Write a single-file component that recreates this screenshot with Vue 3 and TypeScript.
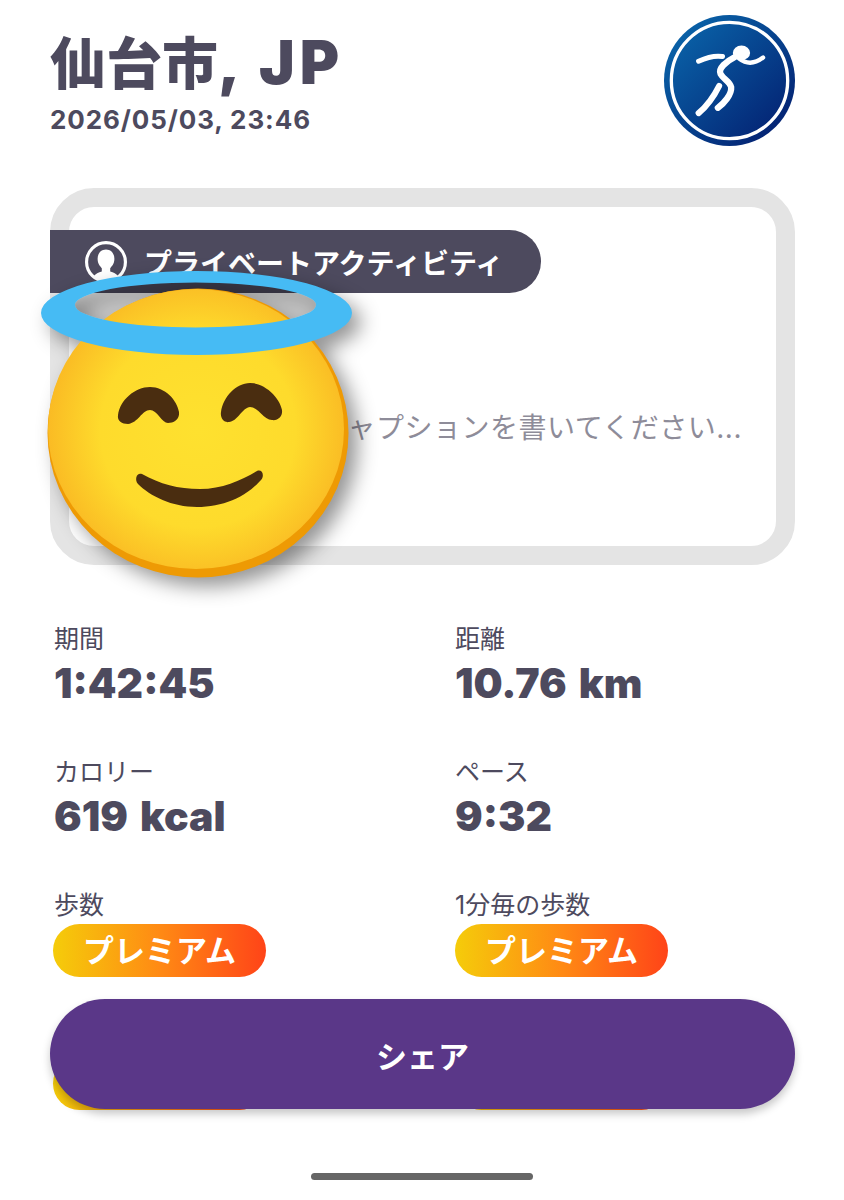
<template>
  <div class="page">
    <header class="header">
      <div class="place">
        <h1 class="title">仙台市<span class="title-latin">, JP</span></h1>
        <div class="date">{{ date }}</div>
      </div>
      <svg class="logo" viewBox="70 45 394 394">
        <defs>
          <linearGradient id="logoFill" x1="0" y1="0" x2="1" y2="1">
            <stop offset="0" stop-color="#0a6cb0" />
            <stop offset="1" stop-color="#03196b" />
          </linearGradient>
        </defs>
        <circle cx="267" cy="242" r="197" fill="url(#logoFill)" />
        <circle cx="267" cy="242" r="175" fill="none" stroke="#fff" stroke-width="10" />
        <g fill="none" stroke="#fff" stroke-linecap="round" stroke-linejoin="round">
          <path d="M174 184C200 172 222 166 246 170" stroke-width="15" />
          <path d="M296 176C314 190 338 196 368 173" stroke-width="13" />
          <path d="M282 172C258 184 232 206 240 222C248 238 268 244 272 262C274 284 250 312 232 324" stroke-width="19" />
          <path d="M236 258C222 286 198 320 174 340" stroke-width="18" />
        </g>
        <ellipse cx="303" cy="159" rx="26" ry="22" fill="#fff" />
      </svg>
    </header>

    <section class="card">
      <div class="private">
        <svg class="private-icon" viewBox="0 0 40 40">
          <circle cx="20" cy="20" r="18.500" fill="#4d4a5e" stroke="#fff" stroke-width="3" />
          <path d="M20 8c5 0 8 4 8 9s-2.500 7-4 9v3c3 1 6 2 8 5-3 3-7 4-12 4s-9-1-12-4c2-3 5-4 8-5v-3c-1.500-2-4-4-4-9s3-9 8-9z" fill="#fff" />
        </svg>
        <span>プライベートアクティビティ</span>
      </div>
      <p class="caption">キャプションを書いてください...</p>
    </section>

    <div class="stats">
      <div v-for="stat in stats" :key="stat.label" class="stat">
        <div class="stat-label">{{ stat.label }}</div>
        <div v-if="stat.value" class="stat-value">{{ stat.value }}</div>
        <div v-else class="premium">プレミアム</div>
      </div>
    </div>

    <!-- emoji sits on top of the card -->
    <svg class="emoji" viewBox="30 260 340 340">
      <defs>
        <radialGradient id="faceFill" cx="198" cy="430" r="150" gradientUnits="userSpaceOnUse">
          <stop offset="0" stop-color="#fee12f" />
          <stop offset="0.65" stop-color="#fedb2c" />
          <stop offset="1" stop-color="#fabb24" />
        </radialGradient>
      </defs>
      <ellipse cx="195.500" cy="305" rx="120.500" ry="22.500" fill="rgba(0, 0, 0, 0.14)" />
      <ellipse cx="198" cy="433" rx="150.500" ry="144.500" fill="#ee9a04" />
      <ellipse cx="196" cy="429" rx="148" ry="140" fill="url(#faceFill)" />
      <g fill="#4a2d10">
        <path d="M118 415C120 400 135 387 150 387C165 387 177 400 179 412C180 420 173 423 168 423C162 423 157 410 150 410C142 410 138 423 128 424C122 424 117 421 118 415Z" />
        <path d="M221 412C223 397 236 383 250 383C265 383 280 398 282 410C283 417 277 421 272 420C264 420 258 407 250 407C243 407 237 422 229 422C224 423 220 418 221 412Z" />
        <path d="M142 474C160 484 178 489 200 489C222 489 240 481 257 471C262 469 265 475 261 480C245 498 222 507 197 507C172 507 150 496 138 484C134 479 137 472 142 474Z" />
      </g>
      <path fill-rule="evenodd" fill="#46bbf4" d="M41 313a155.500 42 0 1 0 311 0a155.500 42 0 1 0-311 0ZM75 305a120.500 22.500 0 1 1 241 0a120.500 22.500 0 1 1-241 0Z" />
    </svg>

    <button class="share">シェア</button>
    <div class="home-bar"></div>
  </div>
</template>

<script setup lang="ts">
interface Stat {
  label: string
  value?: string
}

const date = '2026/05/03, 23:46'

const stats: Stat[] = [
  { label: '期間', value: '1:42:45' },
  { label: '距離', value: '10.76 km' },
  { label: 'カロリー', value: '619 kcal' },
  { label: 'ペース', value: '9:32' },
  { label: '歩数' },
  { label: '1分毎の歩数' },
  { label: 'ケイデンス' },
  { label: 'ストライド' }
]
</script>

<style scoped>
.page {
  position: relative;
  width: 844px;
  height: 1200px;
  overflow: hidden;
  background: #fff;
  box-sizing: border-box;
  padding: 15px 49px 0 50px;
  color: #4d4a5e;
  font-family: "Inter", "Noto Sans CJK JP", sans-serif;
}

.header {
  display: flex;
  justify-content: space-between;
  align-items: flex-start;
}

.place {
  padding-top: 10px;
}

.title {
  margin: 0;
  font-size: 56px;
  line-height: 74px;
  font-weight: 800;
  white-space: nowrap;
}

.title-latin {
  font-size: 60px;
  font-weight: 900;
  letter-spacing: 5px;
}

.date {
  font-size: 26px;
  line-height: 34px;
  font-weight: 700;
  letter-spacing: 0.9px;
  margin-top: 2px;
}

.logo {
  width: 131px;
  height: 131px;
}

.card {
  position: relative;
  height: 377px;
  box-sizing: border-box;
  margin-top: 42px;
  border: 19px solid #e4e4e4;
  border-radius: 44px;
  display: flex;
  align-items: center;
  justify-content: flex-end;
  padding: 102px 34px 0 0;
}

.private {
  position: absolute;
  top: 23px;
  left: -19px;
  width: 491px;
  height: 63px;
  box-sizing: border-box;
  padding: 1px 0 0 35px;
  display: flex;
  align-items: center;
  gap: 17px;
  background: #4d4a5e;
  border-radius: 0 32px 32px 0;
  color: #fff;
  font-size: 28px;
  font-weight: 700;
}

.private-icon {
  width: 42px;
  height: 42px;
  flex: none;
}

.caption {
  margin: 0;
  color: #8e8c99;
  font-size: 28px;
  letter-spacing: 0.5px;
  line-height: 36px;
  white-space: nowrap;
}

.stats {
  display: grid;
  grid-template-columns: 401px 1fr;
  grid-auto-rows: 133px;
  margin-top: 56px;
  padding-left: 4px;
}

.stat-label {
  font-size: 25px;
  line-height: 36px;
}

.stat-value {
  font-size: 41px;
  line-height: 50px;
  font-weight: 900;
  word-spacing: 4px;
  margin-top: 1px;
}

.premium {
  width: 213px;
  height: 53px;
  margin: 1px 0 0 -1px;
  border-radius: 27px;
  background: linear-gradient(90deg, #f5cc0a 0%, #ff8a14 50%, #ff4418 100%);
  color: #fff;
  font-size: 31px;
  font-weight: 700;
  line-height: 53px;
  text-align: center;
}

.stat:nth-child(even) .premium {
  margin-left: 0;
}

.emoji {
  position: absolute;
  left: 30px;
  top: 260px;
  width: 340px;
  height: 340px;
  filter: drop-shadow(9px 9px 10px rgba(0, 0, 0, 0.42));
}

.share {
  position: absolute;
  left: 50px;
  top: 999px;
  width: 745px;
  height: 110px;
  border: none;
  border-radius: 55px;
  background: #5a3788;
  box-shadow: 0 5px 8px rgba(0, 0, 0, 0.22);
  color: #fff;
  font-family: inherit;
  font-size: 31px;
  font-weight: 700;
}

.home-bar {
  position: absolute;
  left: 311px;
  top: 1173px;
  width: 222px;
  height: 7px;
  border-radius: 4px;
  background: #666;
}
</style>
